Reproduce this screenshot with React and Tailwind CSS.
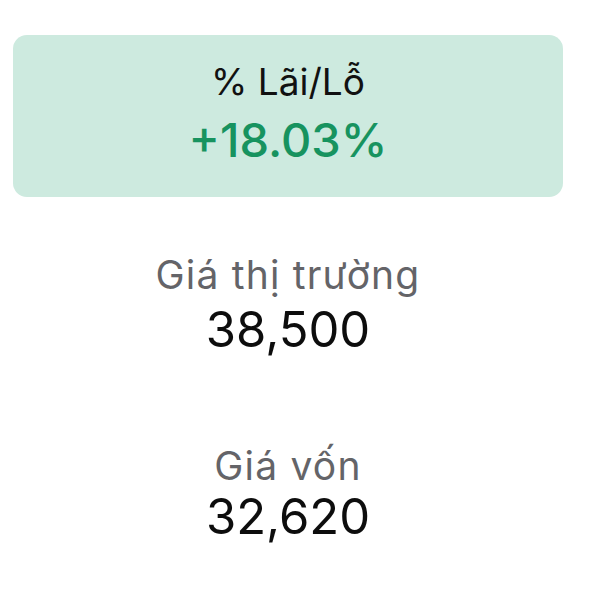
export default function App() {
  return (
    <main className="min-h-screen w-[600px] bg-white font-['Inter','Roboto',sans-serif] pt-[35px]">
      <div className="ml-[13px] flex w-[550px] flex-col">
        <div className="flex h-[162px] flex-col items-center rounded-[14px] bg-[#cdeadf] pt-[25px]">
          <div className="text-[37px] leading-[44px] text-[#111]">% Lãi/Lỗ</div>
          <div className="mt-[9px] text-[47px] leading-[54px] font-medium text-[#17935f]">+18.03%</div>
        </div>
        <div className="mt-[55px] flex flex-col items-center">
          <div className="text-[39px] leading-[46px] tracking-[1.2px] text-[#646468]">Giá thị trường</div>
          <div className="mt-[4px] text-[49px] leading-[56px] text-[#0d0d0d]">38,500</div>
        </div>
        <div className="mt-[85px] flex flex-col items-center">
          <div className="text-[39px] leading-[46px] tracking-[1.2px] text-[#646468]">Giá vốn</div>
          <div className="text-[49px] leading-[56px] text-[#0d0d0d]">32,620</div>
        </div>
      </div>
    </main>
  );
}
